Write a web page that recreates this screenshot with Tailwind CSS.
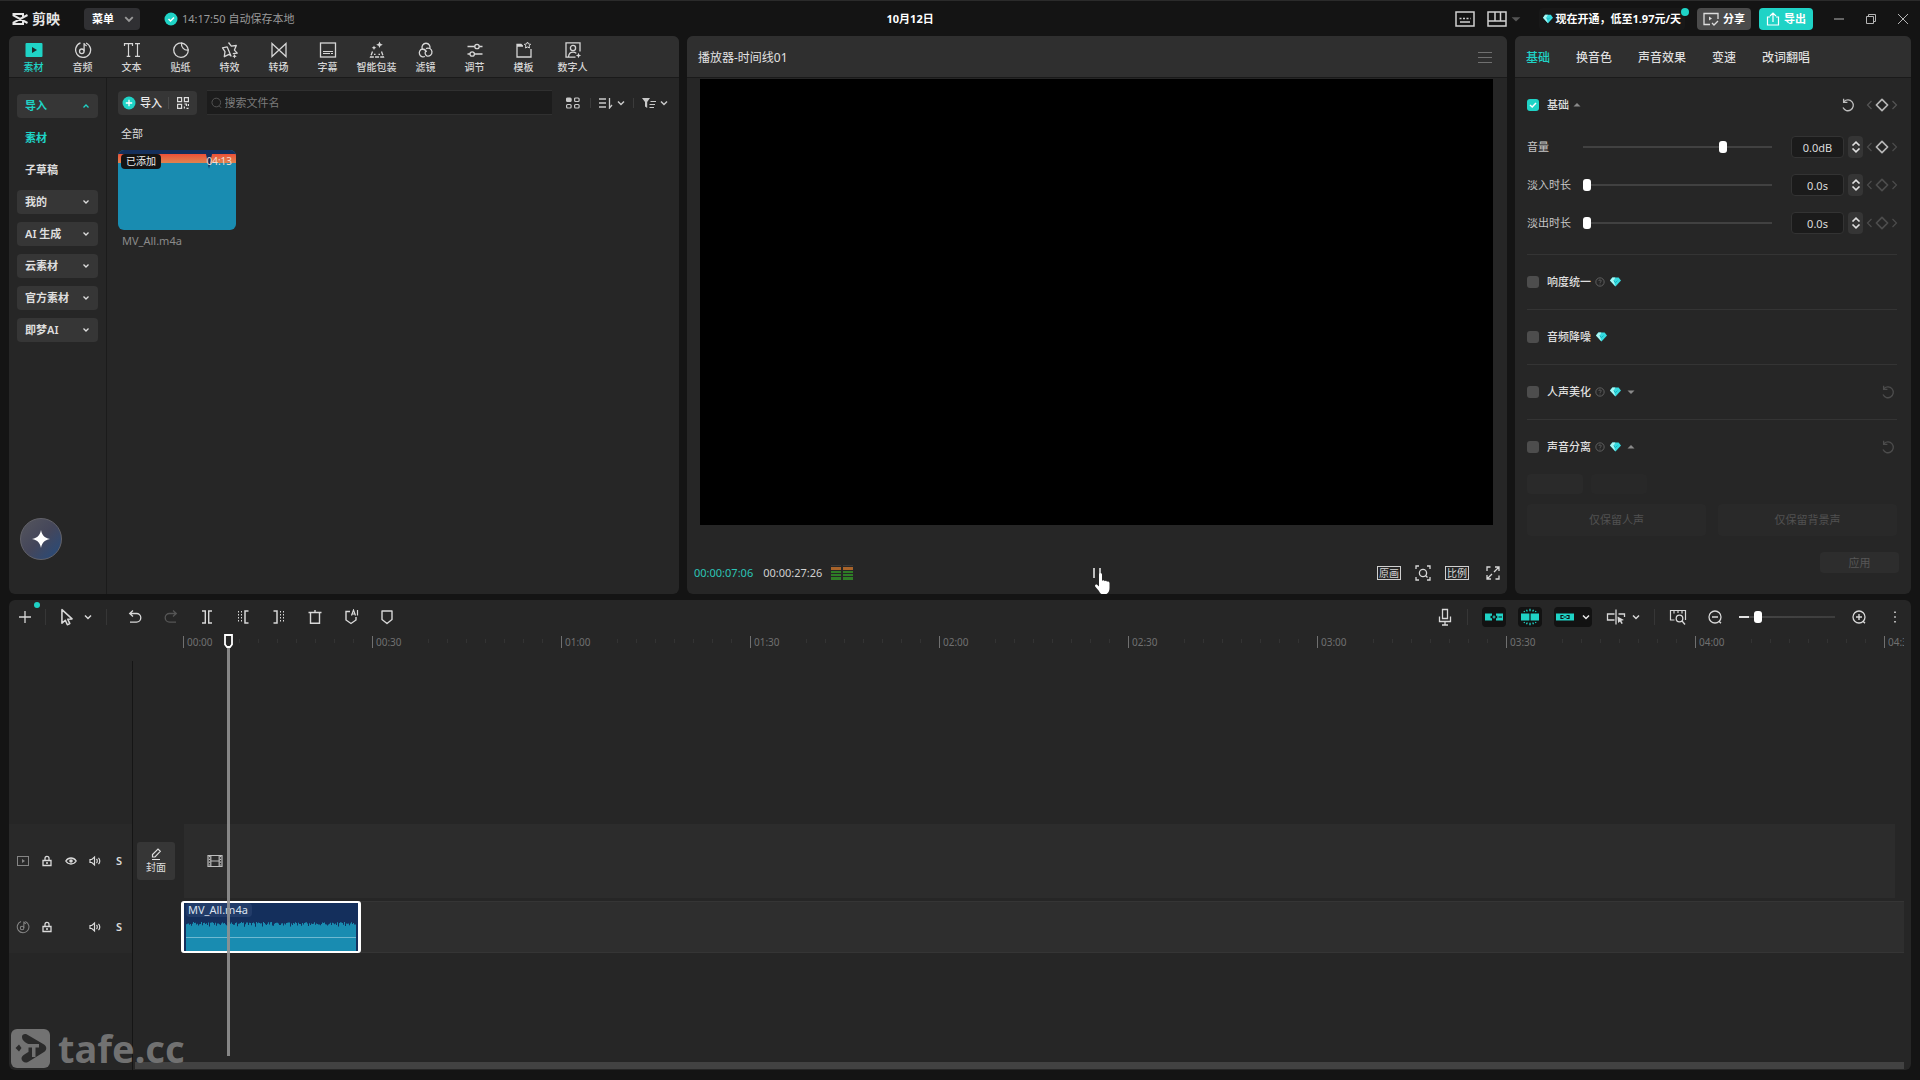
<!DOCTYPE html>
<html lang="zh-CN">
<head>
  <meta charset="UTF-8" />
  <meta name="viewport" content="width=device-width, initial-scale=1.0"/>
  <title>剪映</title>
  <script src="https://cdn.jsdelivr.net/npm/@tailwindcss/browser@4"></script>
</head>
<body class="h-screen min-h-[900px] min-w-[1500px] flex flex-col bg-[#141414] text-[#d6d6d6] text-[11px] leading-4 overflow-hidden relative border-t border-[#2b2b2b] font-['Noto_Sans','Noto_Sans_CJK_SC',sans-serif]">

  <!-- Icon set -->
  <svg class="hidden">
    <symbol id="chev" viewBox="0 0 8 8"><path d="M1 2.5 4 5.5 7 2.5" fill="none" stroke="currentColor" stroke-width="1.5"/></symbol>
    <symbol id="chev-up" viewBox="0 0 8 8"><path d="M1 5.5 4 2.5 7 5.5" fill="none" stroke="currentColor" stroke-width="1.5"/></symbol>
    <symbol id="chev-s" viewBox="0 0 8 8"><path d="M1.500 2.500 4 5 6.500 2.500" fill="none" stroke="currentColor" stroke-width="1.300"/></symbol>
    <symbol id="chev-up-s" viewBox="0 0 8 8"><path d="M1.500 5.500 4 3 6.500 5.500" fill="none" stroke="currentColor" stroke-width="1.300"/></symbol>
    <symbol id="tri" viewBox="0 0 8 8"><path d="M.5 2.5h7L4 6z" fill="currentColor"/></symbol>
    <symbol id="tri-up" viewBox="0 0 8 8"><path d="M.5 5.5h7L4 2z" fill="currentColor"/></symbol>
    <symbol id="gem" viewBox="0 0 12 10"><path d="M2.6 0h6.8L12 3.4 6 10 0 3.4z" fill="#35dbe0"/><path d="M2.6 0h3.2L4 3.6 6 10 0 3.4z" fill="#a9f6f3"/><path d="M4 3.4 6 5.6l2.2-2.2" fill="none" stroke="#0c9aa8" stroke-width=".7"/></symbol>
    <symbol id="help" viewBox="0 0 12 12"><g fill="none" stroke="currentColor"><circle cx="6" cy="6" r="5"/><path d="M4.6 4.8a1.4 1.4 0 1 1 2 1.3c-.4.2-.6.4-.6.9M6 8v1"/></g></symbol>
    <symbol id="reset" viewBox="0 0 14 14"><path d="M3 3.6a5.4 5.4 0 1 1-1 6M2.6.8v3.6h3.8" fill="none" stroke="currentColor" stroke-width="1.3"/></symbol>
    <symbol id="dia" viewBox="0 0 12 12"><path d="M6 1.2 10.8 6 6 10.8 1.2 6z" fill="none" stroke="currentColor" stroke-width="1.5" stroke-linejoin="round"/></symbol>
    <symbol id="lt" viewBox="0 0 8 12"><path d="M6.5 2 2.5 6l4 4" fill="none" stroke="currentColor" stroke-width="1.2"/></symbol>
    <symbol id="gt" viewBox="0 0 8 12"><path d="M1.5 2l4 4-4 4" fill="none" stroke="currentColor" stroke-width="1.2"/></symbol>
    <symbol id="step" viewBox="0 0 10 5"><path d="M1.500 4.500 5 1.200l3.500 3.300" fill="none" stroke="currentColor" stroke-width="1.600"/></symbol>

    <!-- main tabs -->
    <symbol id="t-media" viewBox="0 0 18 18"><rect x=".5" y="2" width="17" height="14" rx="1" fill="currentColor"/><path d="M7 6v6l5-3z" fill="#1d2b2b"/></symbol>
    <symbol id="t-audio" viewBox="0 0 18 18"><g fill="none" stroke="currentColor" stroke-width="1.3"><path d="M12 2a7.500 7.500 0 1 1-5.500-.1"/><circle cx="7.800" cy="10.300" r="2.300"/><path d="M10.100 10.300V2c.3 1.600 1.400 2.400 2.600 2.800"/></g></symbol>
    <symbol id="t-text" viewBox="0 0 18 18"><path d="M1.500 5V2.700h8V5M5.500 2.700v12.600M3.700 15.300h3.600M12 2.700h5M14.500 2.700v12.600M12 15.300h5" fill="none" stroke="currentColor" stroke-width="1.200"/></symbol>
    <symbol id="t-sticker" viewBox="0 0 18 18"><path d="M9.500 1.800A7.300 7.300 0 1 0 16.300 9c-4 .6-7.400-2.600-6.800-7.200C13 2.600 15.800 5.500 16.300 9" fill="none" stroke="currentColor" stroke-width="1.300"/></symbol>
    <symbol id="t-fx" viewBox="0 0 18 18"><path d="m7.500 1.500 2.800 3.700 5-.7-1.900 4.600 2.900 3-4.500.5M10 15l-2-1.700-4.700 2.400.7-5L1.500 6.800l4.700-.9z" fill="none" stroke="currentColor" stroke-width="1.300" stroke-linejoin="round"/><path d="M13.500 13l.7 1.500 1.600.7-1.600.7-.7 1.500-.7-1.500-1.500-.7 1.500-.7z" fill="currentColor"/></symbol>
    <symbol id="t-trans" viewBox="0 0 18 18"><path d="M2 2.500v13L16 2.500v13z" fill="none" stroke="currentColor" stroke-width="1.300"/></symbol>
    <symbol id="t-caption" viewBox="0 0 18 18"><rect x="1.500" y="2" width="15" height="14" fill="none" stroke="currentColor" stroke-width="1.300"/><path d="M4 10h10v1H4zM4 12h7v1H4zM12 12h2v1h-2z" fill="currentColor"/></symbol>
    <symbol id="t-pack" viewBox="0 0 18 18"><path d="M4.500 10.500 2.500 16h13l-2-5.500M6 13.300h1.500M10.500 13.300H12" fill="none" stroke="currentColor" stroke-width="1.300" stroke-dasharray="4 1.200"/><path d="m11.500.5 1 2.300 2.300 1-2.300 1-1 2.300-1-2.300-2.300-1 2.300-1zM6 4.500l.7 1.600 1.600.7-1.600.7L6 9.100l-.7-1.600-1.600-.7 1.600-.7z" fill="currentColor"/></symbol>
    <symbol id="t-filter" viewBox="0 0 18 18"><g fill="none" stroke="currentColor" stroke-width="1.300"><path d="M5.400 8A4 4 0 1 1 12.600 8M8 15.500A4 4 0 1 1 5.300 8c2.200 0 3.500 1.300 4.200 3"/><path d="M9 7.600a4 4 0 1 1 .8 7.300c-1.800-1.100-2.300-3.500-.8-5.300"/></g></symbol>
    <symbol id="t-adjust" viewBox="0 0 18 18"><g fill="none" stroke="currentColor" stroke-width="1.300"><path d="M1.500 5.500h7.300M13.200 5.500h3.300M1.500 13h2.500M8.400 13h8.100"/><circle cx="11" cy="5.500" r="2.200"/><circle cx="6.200" cy="13" r="2.200"/></g></symbol>
    <symbol id="t-tpl" viewBox="0 0 18 18"><path d="M8 5H2v11h14V8M2 7.500V3.500h4L7.500 5" fill="none" stroke="currentColor" stroke-width="1.300"/><path d="m12.500 1 1 2 2.200.3-1.600 1.500.4 2.200-2-1-2 1 .4-2.200-1.600-1.500 2.200-.3z" fill="none" stroke="currentColor"/></symbol>
    <symbol id="t-human" viewBox="0 0 18 18"><g fill="none" stroke="currentColor" stroke-width="1.300"><path d="M16 10.500V1.800H2v14.400h9.500"/><circle cx="9" cy="7" r="2.600"/><path d="M4.500 16c.3-3.500 2-4.800 4.500-4.800 1.500 0 2.500.4 3.300 1.200"/></g><path d="m14.500 11.800.8 1.900 1.900.8-1.900.8-.8 1.900-.8-1.900-1.900-.8 1.900-.8z" fill="currentColor"/></symbol>

    <!-- timeline tools -->
    <symbol id="k-plus" viewBox="0 0 16 16"><path d="M8 2v12M2 8h12" stroke="currentColor" stroke-width="1.300"/></symbol>
    <symbol id="k-arrow" viewBox="0 0 16 16"><path d="M3.500 1.500v12l3-2.600 1.800 4 2.200-1-1.800-3.900 3.800-.3z" fill="none" stroke="currentColor" stroke-width="1.400" stroke-linejoin="round"/></symbol>
    <symbol id="k-undo" viewBox="0 0 16 16"><path d="M3 4.500h6.500a4.300 4.300 0 0 1 0 8.600H3M6 1.500l-3.300 3L6 7.500" fill="none" stroke="currentColor" stroke-width="1.300"/></symbol>
    <symbol id="k-redo" viewBox="0 0 16 16"><path d="M13 4.500H6.500a4.300 4.300 0 0 0 0 8.600H13M10 1.500l3.300 3-3.300 3" fill="none" stroke="currentColor" stroke-width="1.300"/></symbol>
    <symbol id="k-split" viewBox="0 0 16 16"><path d="M3 2h3.300v12H3M13 2H9.700v12H13" fill="none" stroke="currentColor" stroke-width="1.400"/></symbol>
    <symbol id="k-left" viewBox="0 0 16 16"><g fill="none" stroke="currentColor"><path d="M13.500 2H10v12h3.500" stroke-width="1.500"/><path d="M6.500 2v12M3.500 2v12" stroke-dasharray="1.500 1.500"/></g></symbol>
    <symbol id="k-right" viewBox="0 0 16 16"><g fill="none" stroke="currentColor"><path d="M2.500 2H6v12H2.500" stroke-width="1.500"/><path d="M9.500 2v12M12.500 2v12" stroke-dasharray="1.500 1.500"/></g></symbol>
    <symbol id="k-del" viewBox="0 0 16 16"><path d="M1.500 3.500h13M8 1v2.500M3.500 3.500v10.800h9V3.500" fill="none" stroke="currentColor" stroke-width="1.400"/></symbol>
    <symbol id="k-mark" viewBox="0 0 16 16"><path d="M3 2h10v8.500l-5 4-5-4z" fill="none" stroke="currentColor" stroke-width="1.400" stroke-linejoin="round"/></symbol>
    <symbol id="k-aimark" viewBox="0 0 16 16"><path d="M7 2.500H3V11l5 3.500 5-3.500V8" fill="none" stroke="currentColor" stroke-width="1.400"/><path d="M8.500 6.500 10.500 1l2 5.500M9.200 5h2.600M14.500 1v5.500" fill="none" stroke="currentColor" stroke-width="1.200"/></symbol>
    <symbol id="k-mic" viewBox="0 0 16 18"><path d="M5.500 1.500h5v9h-5zM2.500 8.500v5h11v-5M8 13.500V17M5 17h6" fill="none" stroke="currentColor" stroke-width="1.300"/></symbol>
    <symbol id="k-magnet" viewBox="0 0 20 18"><path d="M1 5.500h7v2.300H6.500v2.400H8v2.300H1zM19 5.500h-7v2.300h1.500v2.400H12v2.300h7z" fill="currentColor"/><path d="M8.500 9h3M10 7.500v3M13 9h3" stroke="currentColor" stroke-width="1.200"/><path d="M14.500 9H18" stroke="#111" stroke-width="1.200"/></symbol>
    <symbol id="k-snap" viewBox="0 0 20 18"><path d="M1 5.500h8.400v7H1zM10.600 5.500H19v7h-8.400z" fill="currentColor"/><path d="M10 .8v2.500M10 14.700v2.500M6.500 1.800l.8 1.700M13.500 1.800l-.8 1.700M6.500 16.200l.8-1.700M13.500 16.200l-.8-1.700M4 3l.6 1M16 3l-.6 1M4 15l.6-1M16 15l-.6-1" stroke="currentColor" stroke-width="1.300"/></symbol>
    <symbol id="k-link" viewBox="0 0 20 18"><path d="M1 5.500h18v7H1z" fill="currentColor"/><path d="M8.500 7.500H6v3h2.500M11.500 7.500H14v3h-2.500M8.500 9h3" fill="none" stroke="#111" stroke-width="1.200"/></symbol>
    <symbol id="k-cut" viewBox="0 0 20 18"><path d="M8.500 6H1.500v6h7M12.500 6h6v3M10 1.500v15" fill="none" stroke="currentColor" stroke-width="1.300"/><path d="m11.500 8.500 6.500 3.500-2.700.7 1.500 2.500-1.300.8-1.500-2.500-1.900 1.500z" fill="currentColor"/></symbol>
    <symbol id="k-fit" viewBox="0 0 18 18"><path d="M5.500 12H1.500V2.500h15V12M5 2.500v3M9 2.500v2.500M13 2.500v3" fill="none" stroke="currentColor" stroke-width="1.200"/><circle cx="10.500" cy="10.500" r="3.300" fill="none" stroke="currentColor" stroke-width="1.300"/><path d="m13 13 3 3.500" stroke="currentColor" stroke-width="1.300"/></symbol>
    <symbol id="k-out" viewBox="0 0 16 16"><path d="M5 8h6M12 12.300l2 2" stroke="currentColor" stroke-width="1.400"/><circle cx="8" cy="8" r="6" fill="none" stroke="currentColor" stroke-width="1.300"/></symbol>
    <symbol id="k-in" viewBox="0 0 16 16"><path d="M5 8h6M8 5v6M12 12.300l2 2" stroke="currentColor" stroke-width="1.400"/><circle cx="8" cy="8" r="6" fill="none" stroke="currentColor" stroke-width="1.300"/></symbol>
    <symbol id="k-more" viewBox="0 0 16 16"><path d="M7.200 2.500h1.600v1.600H7.200zM7.200 7.200h1.600v1.600H7.200zM7.200 12h1.600v1.600H7.200z" fill="currentColor"/></symbol>

    <!-- track heads -->
    <symbol id="h-video" viewBox="0 0 14 12"><rect x="1.500" y="1.500" width="11" height="9" fill="none" stroke="currentColor"/><path d="M6 4v4l3-2z" fill="currentColor"/></symbol>
    <symbol id="h-lock" viewBox="0 0 12 12"><path d="M2 5.500h8v5H2zM4 5.500V3.500a2 2 0 0 1 4-.3V5M5 8h2" fill="none" stroke="currentColor" stroke-width="1.300"/></symbol>
    <symbol id="h-eye" viewBox="0 0 12 12"><path d="M.8 6C3.500 2 8.500 2 11.200 6 8.500 10 3.500 10 .8 6z" fill="none" stroke="currentColor" stroke-width="1.300"/><circle cx="6" cy="6" r="1.800" fill="currentColor"/></symbol>
    <symbol id="h-vol" viewBox="0 0 12 12"><path d="M1 4.500h1.800L5.500 2v8L2.800 7.500H1zM7.500 4c1 1 1 3 0 4M9.500 2.800c1.700 1.700 1.700 4.700 0 6.400" fill="none" stroke="currentColor" stroke-width="1.200"/></symbol>
  </svg>

  <!-- Title bar -->
  <header class="h-[35px] shrink-0 flex items-center px-3">
    <svg class="w-4 h-3" viewBox="0 0 16 12" fill="none" stroke="#e6e6e6" stroke-width="2"><path d="M11 3.500V1H1.500v1.500L15.500 10M11 8.500V11H1.500V9.500L15.500 2"/></svg>
    <span class="ml-1 text-sm font-bold text-[#e6e6e6]">剪映</span>
    <button class="ml-6 h-[22px] w-14 flex items-center gap-2.5 pl-2 rounded bg-[#303033] font-bold text-white">菜单<svg class="w-2.5 h-2.5 text-[#999]"><use href="#chev"/></svg></button>
    <svg class="ml-6 w-3.5 h-3.5" viewBox="0 0 14 14"><circle cx="7" cy="7" r="6.500" fill="#1fd3c6"/><path d="m4.500 7 2 2 3.500-3.500" fill="none" stroke="#fff" stroke-width="1.500"/></svg>
    <span class="ml-1 text-[#9a9a9a]">14:17:50 自动保存本地</span>
    <div class="flex-[590]"></div>
    <h1 class="font-bold text-white">10月12日</h1>
    <div class="flex-[520]"></div>
    <button aria-label="快捷键" class="text-[#cfcfcf]"><svg class="w-5 h-4" viewBox="0 0 20 16" fill="none" stroke="currentColor" stroke-width="1.500"><path d="M1 1h18v14H1zM5 11h10"/><path d="M4.500 7.500h11" stroke-dasharray="2 1.500"/></svg></button>
    <button aria-label="布局" class="ml-3 flex items-center gap-1 text-[#cfcfcf]"><svg class="w-5 h-4" viewBox="0 0 20 16" fill="none" stroke="currentColor" stroke-width="1.500"><path d="M1 1h18v14H1zM1 10h18M8 1v9M13.500 1v9"/></svg><svg class="w-2.5 h-2.5 text-[#555]"><use href="#tri"/></svg></button>
    <a href="#" class="relative ml-[18px] h-[22px] px-1 flex items-center gap-0.5 rounded bg-[#181818] font-bold text-white whitespace-nowrap"><svg class="w-2.5 h-2.5"><use href="#gem"/></svg>现在开通，低至1.97元/天<i class="absolute -right-1 top-0 w-2 h-2 rounded-full bg-[#1fd3c6]"></i></a>
    <button class="ml-3 h-[22px] w-[54px] flex items-center justify-center gap-1 rounded bg-[#4b4b4b] font-bold text-white"><svg class="w-4 h-3.5" viewBox="0 0 16 14" fill="none" stroke="#ddd" stroke-width="1.300"><path d="M7 12.500H1v-11h14V7M9 11l2 2 4-4"/><path d="M6 4.500v4l3-2z" fill="#ddd" stroke="none"/></svg>分享</button>
    <button class="ml-2 h-[22px] w-[54px] flex items-center justify-center gap-1 rounded bg-[#1fd3c6] font-bold text-white"><svg class="w-3.5 h-3.5" viewBox="0 0 14 14" fill="none" stroke="#fff" stroke-width="1.200"><path d="M4 5H1.500v8h11V5H10M7 10V1M4 4l3-3 3 3"/></svg>导出</button>
    <div class="ml-[21px] flex gap-[22px] text-[#b5b5b5]">
      <button aria-label="最小化"><svg class="w-2.5 h-2.5" viewBox="0 0 10 10"><path d="M0 5h10" stroke="currentColor"/></svg></button>
      <button aria-label="还原"><svg class="w-2.5 h-2.5" viewBox="0 0 10 10" fill="none" stroke="currentColor"><path d="M.5 2.500h7v7h-7zM2.500 2.500v-2h7v7h-2"/></svg></button>
      <button aria-label="关闭"><svg class="w-2.5 h-2.5" viewBox="0 0 10 10" stroke="currentColor"><path d="m0 0 10 10M10 0 0 10"/></svg></button>
    </div>
  </header>

  <!-- Upper panels -->
  <main class="flex-[559] min-h-0 grid grid-cols-[670fr_820fr_396fr] gap-2 px-[9px]">

    <!-- Media library -->
    <section class="min-w-0 flex flex-col rounded-md bg-[#262626] overflow-hidden">
      <nav id="mainTabs" class="h-[42px] shrink-0 flex bg-[#2f2f2f] border-b border-[#1a1a1a]"></nav>
      <div class="flex-1 flex min-h-0">
        <aside class="w-[98px] shrink-0 flex flex-col border-r border-[#1b1b1b] px-2 pt-4">
          <div id="sideList" class="flex flex-col gap-2"></div>
          <button aria-label="AI 助手" class="mt-auto mb-[34px] ml-[3px] w-[42px] h-[42px] rounded-full flex items-center justify-center border border-[#62626a] bg-linear-to-br from-[#55555c] via-[#44465a] to-[#1f4a7d]"><svg class="w-5 h-5" viewBox="0 0 20 20"><path d="M10 1c1.200 5.500 3 7.500 9 9-6 1.500-7.800 3.500-9 9-1.200-5.500-3-7.500-9-9 6-1.500 7.800-3.500 9-9z" fill="#fff"/></svg></button>
        </aside>
        <div class="flex-1 min-w-0 px-[11px] pt-3">
          <div class="h-[25px] flex items-center">
            <div class="w-[79px] h-6 rounded bg-[#363636] flex items-center pl-1">
              <button class="flex items-center gap-1 text-[#ececec] font-medium"><svg class="w-3.5 h-3.5" viewBox="0 0 14 14"><circle cx="7" cy="7" r="6.500" fill="#1fd3c6"/><path d="M7 3.800v6.400M3.800 7h6.400" stroke="#fff" stroke-width="1.300"/></svg>导入</button>
              <i class="ml-1.5 w-px h-3 bg-[#4a4a4a]"></i>
              <button aria-label="扫码导入" class="ml-2 text-[#dcdcdc]"><svg class="w-3 h-3" viewBox="0 0 12 12" fill="none" stroke="currentColor" stroke-width="1.200"><path d="M.6.600h4v4h-4zM7.400.600h4v4h-4zM.6 7.400h4v4h-4zM7.400 7h2v2M11.400 7v2M7.400 11.400V9.600M9.500 11.400h2"/></svg></button>
            </div>
            <label class="ml-2.5 flex-1 h-[25px] flex items-center gap-0.5 pl-1 bg-[#1c1c1c] border-y border-[#303030]">
              <svg class="w-3 h-3 text-[#555]" viewBox="0 0 12 12" fill="none" stroke="currentColor"><circle cx="5.500" cy="5.500" r="4.500"/><path d="m8.500 9 2 2"/></svg>
              <input type="text" aria-label="搜索文件名" placeholder="搜索文件名" class="w-full bg-transparent outline-none placeholder:text-[#7b7b7b]"/>
            </label>
            <div class="ml-3.5 flex items-center text-[#c9c9c9]">
              <button aria-label="视图"><svg class="w-3.5 h-3" viewBox="0 0 14 12" fill="none" stroke="currentColor" stroke-width="1.200"><rect x=".6" y="1" width="4.500" height="3.500" rx="1" fill="currentColor"/><rect x="8.600" y="1" width="4.500" height="3.500" rx="1"/><rect x=".6" y="7.500" width="4.500" height="3.500" rx="1"/><rect x="8.600" y="7.500" width="4.500" height="3.500" rx="1"/></svg></button>
              <i class="ml-2.5 w-px h-2.5 bg-[#3b3b3b]"></i>
              <button aria-label="排序" class="ml-2 flex items-center gap-1"><svg class="w-3.5 h-3" viewBox="0 0 14 12" fill="none" stroke="currentColor" stroke-width="1.300"><path d="M0 2h7M0 6h7M0 10h7M10.500 1v10l2.500-3"/></svg><svg class="w-2 h-2"><use href="#chev"/></svg></button>
              <i class="ml-2 w-px h-2.5 bg-[#3b3b3b]"></i>
              <button aria-label="筛选" class="ml-2 flex items-center gap-1"><svg class="w-3.5 h-3" viewBox="0 0 14 12"><path d="M0 1h8L5.200 5v6L3 9.500V5z" fill="currentColor"/><path d="M8.500 4.500H14M7.500 7.500H13M7.500 10.500H12" stroke="currentColor" stroke-width="1.200"/></svg><svg class="w-2 h-2"><use href="#chev"/></svg></button>
            </div>
          </div>
          <p class="mt-[11px] ml-[3px] text-[#dcdcdc]">全部</p>
          <figure class="mt-2 w-[118px]">
            <div class="relative h-20 rounded-md overflow-hidden bg-[#198cb1]">
              <div class="h-1 bg-[#142f5c]"></div>
              <div class="h-[9px] bg-linear-to-b from-[#ec4f36] to-[#dd8350]"></div>
              <svg class="absolute left-[88px] top-1 w-1.5 h-4" viewBox="0 0 6 16"><path d="M0 0h6L3 15z" fill="#142f5c"/></svg>
              <span class="absolute left-[3px] top-1 h-[15px] px-[5px] rounded-sm bg-[#141414] text-[10px] leading-[15px] text-[#eee]">已添加</span>
              <span class="absolute right-1 top-1 text-[10px] leading-[15px] text-[#f1dcd4]">04:13</span>
            </div>
            <figcaption class="mt-1 ml-1 leading-[14px] text-[#8b8b8b]">MV_All.m4a</figcaption>
          </figure>
        </div>
      </div>
    </section>

    <!-- Player -->
    <section class="min-w-0 flex flex-col rounded-md bg-[#262626] overflow-hidden">
      <div class="h-[42px] shrink-0 flex items-center justify-between pt-0.5 pl-[11px] pr-[15px] bg-[#2f2f2f] border-b border-[#1a1a1a]">
        <h2 class="text-xs text-[#e2e2e2]">播放器-时间线01</h2>
        <button aria-label="播放器菜单" class="text-[#707070]"><svg class="w-3.5 h-3" viewBox="0 0 14 12"><path d="M0 .5h14M0 5.500h14M0 10.500h14" stroke="currentColor"/></svg></button>
      </div>
      <div class="mt-px ml-[13px] mr-3.5 min-h-0 aspect-video bg-black"></div>
      <div class="mt-auto h-[42px] grid grid-cols-[1fr_auto_1fr] items-center pl-[7px] pr-[7px]">
        <div class="flex items-center">
          <span class="text-[#2cc4b6]">00:00:07:06</span>
          <span class="ml-2.5 text-[#d0d0d0]">00:00:27:26</span>
          <svg class="ml-[9px] w-[22px] h-4" viewBox="0 0 22 16"><g fill="#2e7d26"><path d="M0 6h10v2H0zM0 9h10v2H0zM0 12h10v3H0zM12 6h10v2H12zM12 9h10v2H12zM12 12h10v3H12z"/></g><path d="M0 2h10v3H0zM12 2h10v3H12z" fill="#a8632a"/><path d="M0 0h10v1H0zM12 0h10v1H12z" fill="#3a3a3a"/></svg>
        </div>
        <button aria-label="暂停" class="relative w-2 h-2.5"><svg class="w-2 h-2.5" viewBox="0 0 8 10"><path d="M0 0h2v10H0zM6 0h2v10H6z" fill="#bdbdbd"/></svg>
          <svg class="absolute left-px top-1 w-4 h-6" viewBox="0 0 16 24"><path d="M5 2.500a1.500 1.500 0 0 1 3 0V9c.3-1 2.300-.9 2.600.3.500-1 2.200-.7 2.400.5.600-.8 2.500-.5 2.500 1.200V16c0 4-2 6.500-5.500 6.500-3 0-4-1.500-5-3.500L1.200 14.500c-.7-1.300.9-2.700 2.200-1.500L5 14.600z" fill="#fff"/></svg>
        </button>
        <div class="flex items-center justify-end text-[#d8d8d8]">
          <button class="h-3.5 w-6 border border-[#cfcfcf] text-[10px] leading-3">原画</button>
          <button aria-label="聚焦" class="ml-3.5"><svg class="w-4 h-4" viewBox="0 0 16 16" fill="none" stroke="currentColor" stroke-width="1.300"><path d="M1 4V1h3M12 1h3v3M15 12v3h-3M4 15H1v-3M10.500 10.500l2 2"/><circle cx="8" cy="8" r="3.600"/></svg></button>
          <button class="ml-3.5 h-3.5 w-6 border border-[#cfcfcf] text-[10px] leading-3">比例</button>
          <button aria-label="全屏" class="ml-[17px]"><svg class="w-3.5 h-3.5" viewBox="0 0 14 14" fill="none" stroke="currentColor" stroke-width="1.300"><path d="M1 5V1h3.500M9 1h4v4M13 9.500V13H9.500M5 13H1V9M13 1 8 6M1 13l5-5"/></svg></button>
        </div>
      </div>
    </section>

    <!-- Properties -->
    <section class="min-w-0 flex flex-col rounded-md bg-[#262626] overflow-hidden">
      <nav class="h-[42px] shrink-0 flex items-center gap-[26px] pt-0.5 pl-[11px] bg-[#2f2f2f] border-b border-[#1a1a1a] text-xs font-medium text-[#dedede]">
        <button class="text-[#1fd3c6]">基础</button>
        <button>换音色</button>
        <button>声音效果</button>
        <button>变速</button>
        <button>改词翻唱</button>
      </nav>
      <div class="px-3">
        <div class="h-[50px] pt-1 flex items-center">
          <label class="relative flex items-center gap-2 text-[#dedede] font-medium">
            <input type="checkbox" checked class="appearance-none w-3 h-3 rounded-[3px] bg-[#1fd3c6]"/>
            <svg class="absolute left-0.5 top-1 w-2 h-2 pointer-events-none" viewBox="0 0 8 8"><path d="m1 4 2.200 2L7 2" fill="none" stroke="#fff" stroke-width="1.500"/></svg>
            基础
          </label>
          <svg class="ml-1 w-2 h-2 text-[#8a8a8a]"><use href="#tri-up"/></svg>
          <button aria-label="重置" class="ml-auto mr-2.5 text-[#bdbdbd]"><svg class="w-3.5 h-3.5"><use href="#reset"/></svg></button>
          <span class="flex items-center gap-0.5 text-[#555]"><svg class="w-2 h-3"><use href="#lt"/></svg><svg class="w-3.5 h-3.5 text-[#b5b5b5]"><use href="#dia"/></svg><svg class="w-2 h-3"><use href="#gt"/></svg></span>
        </div>
        <div id="sliders"></div>
        <div class="h-3"></div>
        <div id="toggles"></div>
        <div class="flex gap-2">
          <span class="w-14 h-5 rounded bg-[#2a2a2a]"></span>
          <span class="w-14 h-5 rounded bg-[#282828]"></span>
        </div>
        <div class="mt-2.5 mr-0.5 grid grid-cols-2 gap-3">
          <button disabled class="h-8 rounded bg-[#292929] text-[#515151]">仅保留人声</button>
          <button disabled class="h-8 rounded bg-[#292929] text-[#515151]">仅保留背景声</button>
        </div>
        <button disabled class="mt-4 ml-auto block w-[79px] h-[21px] rounded bg-[#2d2d2d] text-[#575757]">应用</button>
      </div>
    </section>
  </main>

  <!-- Timeline -->
  <section class="flex-[470] min-h-0 mx-[9px] mt-1.5 mb-2.5 flex flex-col rounded-md bg-[#262626] overflow-hidden">
    <div class="h-[33px] shrink-0 flex items-center text-[#d8d8d8]">
      <button aria-label="添加" class="relative ml-2"><svg class="w-4 h-4"><use href="#k-plus"/></svg><i class="absolute -right-[7px] -top-[7px] w-1.5 h-1.5 rounded-full bg-[#1fd3c6]"></i></button>
      <i class="ml-3 w-px h-4 bg-[#363636]"></i>
      <button aria-label="选择" class="ml-3 flex items-center gap-2"><svg class="w-[18px] h-[18px]"><use href="#k-arrow"/></svg><svg class="w-2 h-2"><use href="#chev"/></svg></button>
      <i class="ml-3.5 w-px h-4 bg-[#363636]"></i>
      <div id="editTools" class="ml-5 flex gap-5"></div>
      <div class="ml-auto mr-2 flex items-center">
        <button aria-label="录音"><svg class="w-4 h-[18px]"><use href="#k-mic"/></svg></button>
        <i class="mx-3.5 w-px h-4 bg-[#363636]"></i>
        <button aria-label="主轨磁吸" class="w-6 h-5 flex items-center justify-center rounded-sm bg-[#121212] text-[#1fd3c6]"><svg class="w-5 h-[18px]"><use href="#k-magnet"/></svg></button>
        <button aria-label="自动吸附" class="ml-3 w-6 h-5 flex items-center justify-center rounded-sm bg-[#121212] text-[#1fd3c6]"><svg class="w-5 h-[18px]"><use href="#k-snap"/></svg></button>
        <button aria-label="联动" class="ml-3 w-[38px] h-5 flex items-center gap-[7px] pl-px rounded-sm bg-[#121212] text-[#1fd3c6]"><svg class="w-5 h-[18px]"><use href="#k-link"/></svg><svg class="w-2 h-2 text-[#e8e8e8]"><use href="#chev"/></svg></button>
        <button aria-label="预览轴" class="ml-3.5 flex items-center gap-1.5"><svg class="w-5 h-[18px]"><use href="#k-cut"/></svg><svg class="w-2 h-2"><use href="#chev"/></svg></button>
        <i class="mx-3.5 w-px h-4 bg-[#363636]"></i>
        <button aria-label="适应时间线"><svg class="w-[18px] h-[18px]"><use href="#k-fit"/></svg></button>
        <button aria-label="缩小" class="ml-5"><svg class="w-4 h-4"><use href="#k-out"/></svg></button>
        <span class="ml-4 relative w-24 h-4 flex items-center">
          <i class="absolute left-0 w-4 h-0.5 bg-[#e0e0e0]"></i>
          <input type="range" aria-label="缩放" min="0" max="100" value="17" class="relative appearance-none w-full h-0.5 bg-linear-to-r from-transparent from-10% via-[#454545] via-10% to-[#3d3d3d] [&::-webkit-slider-thumb]:appearance-none [&::-webkit-slider-thumb]:w-2 [&::-webkit-slider-thumb]:h-3 [&::-webkit-slider-thumb]:rounded-[3px] [&::-webkit-slider-thumb]:bg-white"/>
        </span>
        <button aria-label="放大" class="ml-4"><svg class="w-4 h-4"><use href="#k-in"/></svg></button>
        <button aria-label="更多" class="ml-5"><svg class="w-4 h-4"><use href="#k-more"/></svg></button>
      </div>
    </div>

    <div class="flex-1 flex min-h-0">
      <!-- Track heads -->
      <div class="w-[124px] shrink-0 flex flex-col mt-7 border-r border-[#151515] text-[#dadada]">
        <div class="flex-[162]"></div>
        <div class="h-[74px] flex items-center gap-3 pl-[7px] bg-[#292929]">
          <svg class="w-3.5 h-3 text-[#858585] -mr-px"><use href="#h-video"/></svg>
          <button aria-label="锁定"><svg class="w-3 h-3"><use href="#h-lock"/></svg></button>
          <button aria-label="隐藏"><svg class="w-3 h-3"><use href="#h-eye"/></svg></button>
          <button aria-label="静音"><svg class="w-3 h-3"><use href="#h-vol"/></svg></button>
          <button class="w-3 font-semibold">S</button>
        </div>
        <div class="h-[55px] flex items-center gap-3 pl-[7px] pt-[3px] bg-[#292929]">
          <svg class="w-3.5 h-3.5 text-[#858585] -mr-px"><use href="#t-audio"/></svg>
          <button aria-label="锁定"><svg class="w-3 h-3"><use href="#h-lock"/></svg></button>
          <span class="w-3"></span>
          <button aria-label="静音"><svg class="w-3 h-3"><use href="#h-vol"/></svg></button>
          <button class="w-3 font-semibold">S</button>
        </div>
        <div class="flex-[117]"></div>
      </div>

      <!-- Tracks -->
      <div class="relative flex-1 min-w-0 flex flex-col">
        <div id="ruler" class="h-[28px] shrink-0 ml-[50px] mr-[7px] pt-px flex overflow-hidden text-[10px] leading-[14px] text-[#707070]"></div>
        <div class="flex-[162]"></div>
        <div class="h-[74px] flex">
          <div class="w-[51px] pl-1 flex items-center">
            <button class="w-[38px] h-[38px] flex flex-col items-center justify-center rounded-[3px] bg-[#363636] text-[10px] leading-[14px] text-[#dedede]"><svg class="w-3 h-3" viewBox="0 0 12 12" fill="none" stroke="currentColor" stroke-width="1.200"><path d="M2.500 9V6.500l5.500-5.500L10.300 3.300 5 9zM2 11.500h8"/></svg>封面</button>
          </div>
          <div class="flex-1 mr-4 flex items-center pl-[23px] bg-[#2c2c2c] text-[#bcbcbc]">
            <svg class="w-4 h-3.5" viewBox="0 0 16 14" fill="none" stroke="currentColor" stroke-width="1.200"><path d="M1 1.500h14v11H1zM3.800 1.500v11M12.200 1.500v11M3.800 7h8.400"/><path d="M2.400 2v10M13.600 2v10" stroke-dasharray="1.200 1.600"/></svg>
          </div>
        </div>
        <div class="mt-[3px] ml-[51px] mr-[7px] h-[52px] relative bg-[#2e2e2e] border-y border-[#353535]">
          <div class="absolute -left-[3px] -top-px w-[180px] h-[52px] rounded-[3px] border-2 border-x-[3px] border-white bg-[#142f5c] overflow-hidden">
            <span class="absolute left-0.5 top-0 h-[14px] pl-0.5 pr-1 rounded-sm bg-[#223c69] text-[11px] leading-[14px] text-[#dbe3ef]">MV_All.m4a</span>
            <svg class="absolute left-0.5 bottom-0 w-[170px] h-[30px]" viewBox="0 0 170 30"><path id="wave" fill="#198cb1"/><path d="M0 16.500h170" stroke="#6fb9d1"/></svg>
          </div>
        </div>
        <div class="flex-[117] flex flex-col justify-end">
          <div class="ml-0.5 mr-[7px] h-[7px] mb-px bg-[#424242]"></div>
        </div>

        <!-- Playhead -->
        <div class="absolute left-[91px] top-px bottom-3.5 w-[9px] flex flex-col items-center">
          <svg class="w-[9px] h-3.5 shrink-0" viewBox="0 0 9 14"><path d="M1 1h7v9.500L6 13H3L1 10.500z" fill="#262626" stroke="#fff" stroke-width="1.800"/></svg>
          <i class="w-[3px] flex-1 bg-[#919191]/90"></i>
        </div>
      </div>
    </div>
  </section>

  <!-- Watermark -->
  <div class="absolute left-[11px] bottom-3 flex items-center gap-2 text-[#767676]/95 pointer-events-none">
    <svg class="w-[39px] h-[39px]" viewBox="0 0 39 39"><rect width="39" height="39" rx="6" fill="currentColor"/><path d="M11 8c0-3 3-3.500 5-2.500l17 10c3 2 3 5.500 0 7.500L17 33c-3 1.500-6.500-.5-6.500-3.500 0-3 4.500-5 7-6.500V15C14 13.500 11 11 11 8z" fill="#2b2b2b"/><path d="M4.500 19 8 15.500l2.500 3.500L8 22.500z" fill="#2b2b2b"/><path d="M17 15h11v3.500h-3.500V28H21v-9.500h-4z" fill="currentColor"/></svg>
    <span class="text-[38px] leading-[39px] font-bold">tafe.cc</span>
  </div>

  <script>
    const $ = id => document.getElementById(id);

    // top tabs of the media library
    const tabs = [
      ["t-media", "素材"], ["t-audio", "音频"], ["t-text", "文本"], ["t-sticker", "贴纸"],
      ["t-fx", "特效"], ["t-trans", "转场"], ["t-caption", "字幕"], ["t-pack", "智能包装"],
      ["t-filter", "滤镜"], ["t-adjust", "调节"], ["t-tpl", "模板"], ["t-human", "数字人"]
    ];
    $("mainTabs").innerHTML = tabs.map(([icon, name], i) => `
      <button class="w-[49px] shrink-0 pt-[5px] flex flex-col items-center gap-px text-[10px] leading-[14px] font-medium whitespace-nowrap ${i === 0 ? 'text-[#1fd3c6]' : 'text-[#d6d6d6]'}">
        <svg class="w-[18px] h-[18px]"><use href="#${icon}"/></svg>${name}
      </button>`).join("");

    // sidebar
    const side = [
      { name: "导入", icon: "chev-up-s", active: true },
      { name: "素材", active: true },
      { name: "子草稿" },
      { name: "我的", icon: "chev-s" },
      { name: "AI 生成", icon: "chev-s" },
      { name: "云素材", icon: "chev-s" },
      { name: "官方素材", icon: "chev-s" },
      { name: "即梦AI", icon: "chev-s" }
    ];
    $("sideList").innerHTML = side.map(s => `
      <button class="h-6 flex items-center justify-between pl-2 pr-2 rounded font-semibold ${s.icon ? 'bg-[#363636]' : ''} ${s.active ? 'text-[#1fd3c6]' : 'text-[#dedede]'}">
        ${s.name}${s.icon ? `<svg class="w-2 h-2"><use href="#${s.icon}"/></svg>` : ""}
      </button>`).join("");

    // audio sliders
    const sliders = [
      { name: "音量", pos: 75, text: "0.0dB", on: true },
      { name: "淡入时长", pos: 0, text: "0.0s" },
      { name: "淡出时长", pos: 0, text: "0.0s" }
    ];
    $("sliders").innerHTML = sliders.map((s, i) => `
      <div class="h-[38px] flex items-center">
        <label for="range${i}" class="w-14 text-[#c6c6c6]">${s.name}</label>
        <input id="range${i}" type="range" min="0" max="100" value="${s.pos}" class="appearance-none flex-1 min-w-0 h-0.5 bg-[#414141] [&::-webkit-slider-thumb]:appearance-none [&::-webkit-slider-thumb]:w-2 [&::-webkit-slider-thumb]:h-3 [&::-webkit-slider-thumb]:rounded-[3px] [&::-webkit-slider-thumb]:bg-white"/>
        <input type="text" aria-label="${s.name}数值" value="${s.text}" class="ml-[19px] w-[53px] h-[22px] bg-[#1b1b1b] border border-[#333] rounded-sm text-center text-[#dcdcdc]"/>
        <span class="ml-1 w-[15px] h-[22px] flex flex-col items-center justify-center gap-0.5 rounded-sm bg-[#353535] text-[#e0e0e0]">
          <button aria-label="增加"><svg class="w-2.5 h-[5px]"><use href="#step"/></svg></button>
          <button aria-label="减少" class="rotate-180"><svg class="w-2.5 h-[5px]"><use href="#step"/></svg></button>
        </span>
        <span class="ml-0.5 flex items-center gap-0.5 text-[#4c4c4c]"><svg class="w-2 h-3"><use href="#lt"/></svg><svg class="w-3.5 h-3.5 ${s.on ? 'text-[#b5b5b5]' : 'text-[#4c4c4c]'}"><use href="#dia"/></svg><svg class="w-2 h-3"><use href="#gt"/></svg></span>
      </div>`).join("");

    // feature switches
    const toggles = [
      { name: "响度统一", help: true },
      { name: "音频降噪" },
      { name: "人声美化", help: true, arrow: "tri", reset: true },
      { name: "声音分离", help: true, arrow: "tri-up", reset: true }
    ];
    $("toggles").innerHTML = toggles.map(t => `
      <div class="h-[55px] mr-0.5 flex items-center border-t border-[#343434]">
        <label class="flex items-center gap-2 text-[#dedede] font-medium"><input type="checkbox" class="appearance-none w-3 h-3 rounded-[3px] bg-[#4d4d4d]"/>${t.name}</label>
        ${t.help ? `<svg class="ml-1 w-2.5 h-2.5 text-[#6a6a6a]"><use href="#help"/></svg>` : ""}
        <svg class="ml-[5px] w-[11px] h-2.5"><use href="#gem"/></svg>
        ${t.arrow ? `<svg class="ml-1.5 w-2 h-2 text-[#8a8a8a]"><use href="#${t.arrow}"/></svg>` : ""}
        ${t.reset ? `<button aria-label="重置${t.name}" class="ml-auto mr-0.5 text-[#4c4c4c]"><svg class="w-3.5 h-3.5"><use href="#reset"/></svg></button>` : ""}
      </div>`).join("");

    // timeline edit buttons
    const tools = [["k-undo", "撤销"], ["k-redo", "恢复"], ["k-split", "分割"], ["k-left", "向左裁剪"], ["k-right", "向右裁剪"], ["k-del", "删除"], ["k-aimark", "智能标记"], ["k-mark", "标记"]];
    $("editTools").innerHTML = tools.map(([icon, name]) => `
      <button aria-label="${name}" class="${icon === 'k-redo' ? 'text-[#555]' : 'text-[#d8d8d8]'}"><svg class="w-4 h-4"><use href="#${icon}"/></svg></button>`).join("");

    for (let i = 0; i < 10; i++) {
      const t = String(Math.floor(i / 2)).padStart(2, "0") + ":" + (i % 2 ? "30" : "00");
      let ticks = "";
      for (let k = 3; k < 10; k++) ticks += `<i class="w-px h-1 mr-[18px] shrink-0 bg-[#333]"></i>`;
      $("ruler").innerHTML += `
        <div class="w-[189px] shrink-0 flex items-start pt-px">
          <span class="w-14 shrink-0 flex"><i class="mt-px w-px h-3 mr-[3px] bg-[#707070]"></i>${t}</span>
          <span class="pt-1 flex">${ticks}</span>
        </div>`;
    }

    // clip waveform
    let d = "M0 30";
    for (let x = 0; x <= 170; x++) {
      const h = 1 + Math.abs(Math.sin(x * 1.9) * 2 + Math.sin(x * 0.83) * 1.6 + Math.sin(x * 3.7) * 1.5);
      d += `V${h.toFixed(1)}H${x}`;
    }
    $("wave").setAttribute("d", d + "V30z");
  </script>
</body>
</html>
